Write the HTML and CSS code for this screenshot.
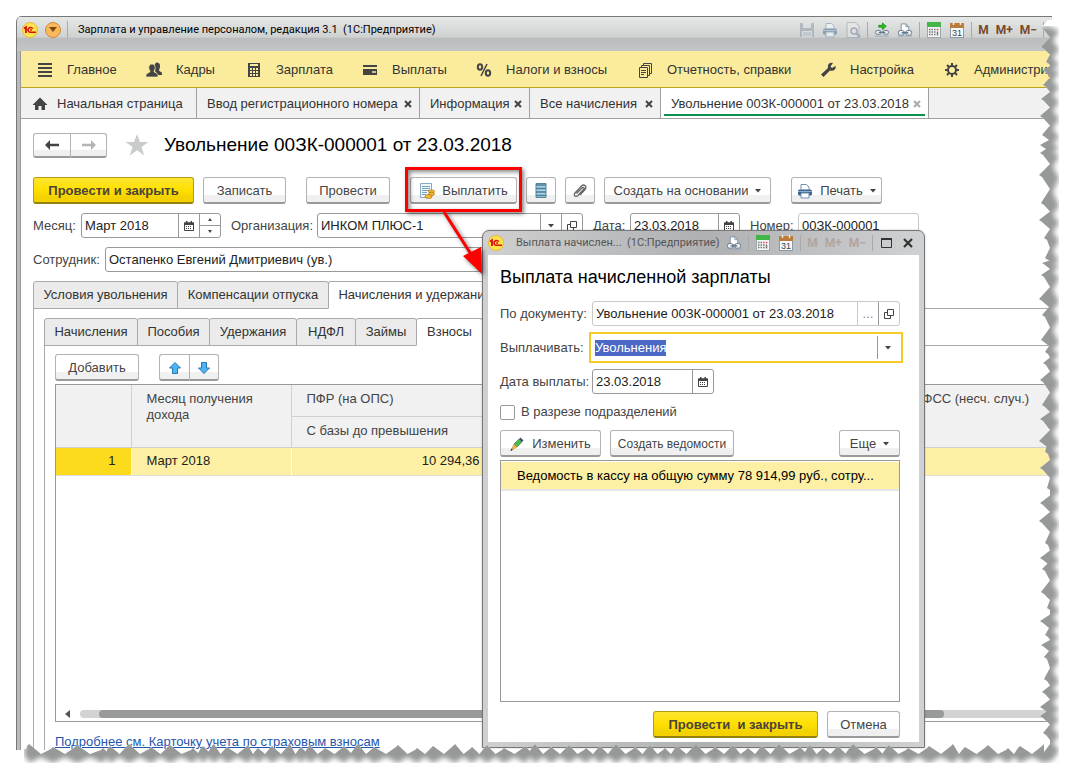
FILE: index.html
```html
<!DOCTYPE html>
<html lang="ru">
<head>
<meta charset="utf-8">
<title>Зарплата и управление персоналом</title>
<link rel="stylesheet" href="styles.css">
</head>
<body>
<svg class="defs" aria-hidden="true">
  <symbol id="logo" viewBox="0 0 16 16"><circle cx="8" cy="8" r="7.5" fill="#ffe34d" stroke="#e8b93a"/><path d="M2 6.500 4 5.200V11" fill="none" stroke="#d8150b" stroke-width="1.900"/><path d="M10.800 6.600A2.600 2.400 0 1 0 8.800 10.300H14" fill="none" stroke="#d8150b" stroke-width="1.600"/><circle cx="9" cy="8" r=".9" fill="#d8150b"/></symbol>
  <symbol id="cal" viewBox="0 0 10 10"><path d="M.5 2h9v7.500h-9z" fill="#fff" stroke="#444"/><path d="M0 1.500h10V4H0zM2 0h1.500v2H2zM6.500 0H8v2H6.500z" fill="#444"/><path d="M2 5.500h6M2 7.500h6" stroke="#444" stroke-dasharray="1 1"/></symbol>
  <symbol id="open" viewBox="0 0 10 10"><path d="M3.500.5h6v6h-6zM3 3.500H.5v6h6V7" fill="none" stroke="#444"/></symbol>
  <symbol id="down" viewBox="0 0 6 4"><path d="M0 0h6L3 3.500z" fill="#444"/></symbol>
  <symbol id="linkprint" viewBox="0 0 17 16"><path d="M4.500 9V1.500h5l3 3V9" fill="#fff" stroke="#7d93ab"/><path d="M9.500 1.500v3h3" fill="none" stroke="#7d93ab"/><rect x="1.500" y="8.500" width="6" height="5" rx="2" fill="#eee" stroke="#60788f"/><rect x="9.500" y="8.500" width="6" height="5" rx="2" fill="#eee" stroke="#60788f"/><path d="M5 11h7" stroke="#60788f" stroke-width="1.500"/><path d="M1 14.500h15" stroke="#95a5b5"/></symbol>
  <symbol id="linkgo" viewBox="0 0 17 16"><path d="M5 3h4V.5L13 4 9 7.500V5H5z" fill="#23c71c" stroke="#0c7a0a" stroke-width=".7"/><rect x="1.500" y="8.500" width="6" height="4" rx="2" fill="#eee" stroke="#60788f"/><rect x="9.500" y="8.500" width="6" height="4" rx="2" fill="#eee" stroke="#60788f"/><path d="M5 10.500h7" stroke="#60788f" stroke-width="1.500"/><path d="M1 14.500h15" stroke="#95a5b5"/></symbol>
  <symbol id="calc" viewBox="0 0 14 16"><rect x=".5" y=".5" width="13" height="15" fill="#f4f4f4" stroke="#9aa"/><path d="M0 0h14v5H0z" fill="#43b649"/><path d="M2 7.500h7M2 10h7M2 12.500h7" stroke="#777" stroke-width="1.500" stroke-dasharray="1.500 1"/><path d="M10.500 6.800v1.500" stroke="#e33" stroke-width="1.500"/><path d="M10.500 9.500v4" stroke="#777" stroke-width="1.500"/></symbol>
  <symbol id="date" viewBox="0 0 14 16"><rect x=".5" y="1.500" width="13" height="14" fill="#f7f9fb" stroke="#8c9aa8"/><path d="M0 1h14v5H0z" fill="#bd7b3b"/><path d="M3.500 0v3M10.500 0v3" stroke="#f4e8d8" stroke-width="1.500"/><text x="7" y="14" text-anchor="middle" class="icon-text">31</text></symbol>
  <symbol id="printer" viewBox="0 0 16 15"><path d="M4 6V1h5.500L12 3.500V6" fill="#fff" stroke="#6f8fb3"/><rect x="1" y="6" width="14" height="6" rx="1.500" fill="#3c628d"/><path d="M1 8h14" stroke="#8fb0d2"/><path d="M4 9.500h8v5H4z" fill="#fff" stroke="#6f8fb3"/></symbol>
</svg>

<div class="stage">
  <main class="window">
    <header class="titlebar">
      <svg class="i16"><use href="#logo"/></svg>
      <button class="round" aria-label="Меню"><svg width="8" height="5"><path d="M0 0h8L4 5z" fill="#7b4a17"/></svg></button>
      <span class="app-title">Зарплата и управление персоналом, редакция 3.1&nbsp; (1С:Предприятие)</span>
      <div class="tools">
        <svg class="i16 dim" viewBox="0 0 16 16"><path d="M1 1h14v14H1z" fill="#8a97a5"/><path d="M4 1h8v5H4zM3 9h10v6H3z" fill="#dde1e5"/><path d="M4 11h8M4 13h8" stroke="#8a97a5"/></svg>
        <svg class="i16 dim"><use href="#printer"/></svg>
        <svg class="i16 dim" viewBox="0 0 16 16"><path d="M2 .5h8L14 4v11.500H2z" fill="#e8eaec" stroke="#8a97a5"/><circle cx="9" cy="9" r="3" fill="#dfe6ee" stroke="#6d7f91" stroke-width="1.500"/><path d="m11 11 4 4" stroke="#6d7f91" stroke-width="2"/></svg>
        <i class="sep"></i>
        <svg class="i16"><use href="#linkgo"/></svg>
        <svg class="i16"><use href="#linkprint"/></svg>
        <i class="sep"></i>
        <svg class="i16"><use href="#calc"/></svg>
        <svg class="i16"><use href="#date"/></svg>
        <i class="sep"></i>
        <b>M</b><b>M+</b><b>M−</b>
        <i class="sep"></i>
      </div>
    </header>

    <nav class="menu">
      <a href="#"><svg viewBox="0 0 16 16"><path d="M1 2h14M1 6h14M1 10h14M1 14h14" stroke="#444" stroke-width="2"/></svg>Главное</a>
      <a href="#"><svg viewBox="0 0 16 16"><path d="M11 .5c2 0 3 1.500 3 3.500S13 7.500 13 8.500s3 1 3 3V13h-4l-3-4 .5-2C8 5 8.500.5 11 .5z" fill="#444"/><path d="M6 2c2 0 3.200 1.500 3.200 3.500S8 8.500 8 9.500c0 1.500 4 1 4 4V15H0v-1.500c0-3 4-2.500 4-4 0-1-1.200-2-1.200-4S4 2 6 2z" fill="#444" stroke="#fbec9d" stroke-width=".7"/></svg>Кадры</a>
      <a href="#"><svg viewBox="0 0 16 16"><path d="M2 1h12v14H2z" fill="#444"/><path d="M4 3h8M4 7h2m1 0h2m1 0h2M4 10h2m1 0h2m1 0h2M4 13h2m1 0h2m1 0h2" stroke="#fbec9d" stroke-width="2"/></svg>Зарплата</a>
      <a href="#"><svg viewBox="0 0 16 16"><path d="M1 3h14v2H1zM1 7h14v6H1z" fill="#444"/><path d="M10 10h4" stroke="#fbec9d" stroke-width="1.500"/></svg>Выплаты</a>
      <a href="#"><svg viewBox="0 0 16 16"><g fill="none" stroke="#444" stroke-width="2"><ellipse cx="4" cy="5" rx="2.200" ry="2.800"/><ellipse cx="12" cy="11" rx="2.200" ry="2.800"/><path d="M11 2 5 14" stroke-width="1.500"/></g></svg>Налоги и взносы</a>
      <a href="#"><svg viewBox="0 0 16 16"><path d="M2.500 5.500h8v10h-8zM4.500 5V3.500h8v10H11M6.500 3V1.500h8v10H13" fill="none" stroke="#444"/><path d="M4 8.500h5M4 10.500h5M4 12.500h3" stroke="#444"/></svg>Отчетность, справки</a>
      <a href="#"><svg viewBox="0 0 16 16"><path d="M15.500 4 12 6 10.500 4.500 13 1C10 0 7 2 8 6L1 12.500 3.500 15 10 8.500c4 1 6.500-1.500 5.500-4.500z" fill="#444"/></svg>Настройка</a>
      <a href="#"><svg viewBox="0 0 16 16"><circle cx="8" cy="8" r="4" fill="none" stroke="#444" stroke-width="2"/><path d="M8 1v3M8 12v3M1 8h3M12 8h3M3 3l2 2M11 11l2 2M13 3l-2 2M5 11l-2 2" stroke="#444" stroke-width="2"/></svg>Администрирование</a>
    </nav>

    <nav class="pages">
      <a href="#" class="home"><svg class="i16" viewBox="0 0 16 16"><path d="M8 1.500 15.500 9H13v5H9.500v-4h-3v4H3V9H.5z" fill="#444"/></svg>Начальная страница</a>
      <a href="#" class="p2">Ввод регистрационного номера<svg class="x" viewBox="0 0 8 8"><path d="m1 1 6 6m0-6L1 7"/></svg></a>
      <a href="#" class="p3">Информация<svg class="x" viewBox="0 0 8 8"><path d="m1 1 6 6m0-6L1 7"/></svg></a>
      <a href="#" class="p4">Все начисления<svg class="x" viewBox="0 0 8 8"><path d="m1 1 6 6m0-6L1 7"/></svg></a>
      <a href="#" class="p5 active">Увольнение 00ЗК-000001 от 23.03.2018<svg class="x" viewBox="0 0 8 8"><path d="m1 1 6 6m0-6L1 7"/></svg></a>
    </nav>

    <section class="doc">
      <div class="headline">
        <div class="pair nav-pair">
          <button class="btn" aria-label="Назад"><svg width="14" height="10"><path d="M5 0v3.800h9v2.400H5V10L0 5z" fill="#444"/></svg></button>
          <button class="btn" aria-label="Вперед"><svg width="14" height="10"><path d="M9 0v3.800H0v2.400h9V10l5-5z" fill="#b4b4b4"/></svg></button>
        </div>
        <svg class="star" viewBox="0 0 24 24"><path d="m12 1 3 8h8.500l-7 5 2.700 8.500L12 17.300l-7.200 5.200L7.500 14l-7-5H9z" fill="#c9cbcc"/></svg>
        <h1>Увольнение 00ЗК-000001 от 23.03.2018</h1>
      </div>

      <div class="commands">
        <button class="btn primary w-main">Провести и закрыть</button>
        <button class="btn w-save">Записать</button>
        <button class="btn w-post apart">Провести</button>
        <div class="target apart">
          <button class="btn w-pay"><svg class="i16" viewBox="0 0 16 16"><path d="M1.500.5h11v14h-11z" fill="#eef6fb" stroke="#88a9c2"/><path d="M3 3.500h8M3 5.500h8M3 7.500h8M3 9.500h5M3 11.500h4" stroke="#7aa3bf"/><g fill="#f3b72f" stroke="#a9700c" stroke-width=".6"><ellipse cx="12.500" cy="8.500" rx="3" ry="1.700"/><ellipse cx="12.500" cy="11" rx="3" ry="1.700"/><ellipse cx="9.500" cy="13.500" rx="3.500" ry="2"/></g></svg>Выплатить</button>
          <span class="mark"></span>
          <svg class="arrow" width="60" height="76"><g filter="drop-shadow(2px 2px 2px #0008)"><path d="m5 2 32 50" stroke="#f00" stroke-width="3"/><path d="M24 46 42 37 43 64z" fill="#f00"/></g></svg>
        </div>
        <button class="btn w-ico" aria-label="Движения"><svg width="12" height="15"><path d="M1 .5h10v14H1z" fill="#a8d0de" stroke="#56859b"/><path d="M1 2h10M1 5.500h10M1 9h10M1 12.500h10" stroke="#487f9b" stroke-width="1.500"/></svg></button>
        <button class="btn w-ico" aria-label="Файлы"><svg width="14" height="14" viewBox="0 0 14 14"><path d="M3.500 9.500 9 4c1.500-1.500 3 0 1.500 1.500L5 11.500c-2 2-5 0-3-2.500L8.500 2c2.500-2.500 6 .5 3.500 3.500L7 11" fill="none" stroke="#666" stroke-width="1.300"/></svg></button>
        <button class="btn w-base">Создать на основании<svg class="dn"><use href="#down"/></svg></button>
        <button class="btn w-print apart"><svg class="i16"><use href="#printer"/></svg>Печать<svg class="dn"><use href="#down"/></svg></button>
      </div>

      <div class="fields">
        <label class="l-month" for="month">Месяц:</label>
        <div class="field f-month"><input id="month" value="Март 2018"><button aria-label="Календарь"><svg class="i10"><use href="#cal"/></svg></button>
          <div class="spin"><button aria-label="Больше"><svg width="4" height="3"><path d="M0 3h4L2 0z" fill="#444"/></svg></button><button aria-label="Меньше"><svg width="4" height="3"><path d="M0 0h4L2 3z" fill="#444"/></svg></button></div></div>
        <label class="l-org" for="org">Организация:</label>
        <div class="field f-org"><input id="org" value="ИНКОМ ПЛЮС-1"><button aria-label="Выбрать"><svg class="dn"><use href="#down"/></svg></button><button aria-label="Открыть"><svg class="i10"><use href="#open"/></svg></button></div>
        <label class="l-date" for="date1">Дата:</label>
        <div class="field f-date"><input id="date1" value="23.03.2018"><button aria-label="Календарь"><svg class="i10"><use href="#cal"/></svg></button></div>
        <label class="l-num" for="num">Номер:</label>
        <div class="field f-num light"><input id="num" value="00ЗК-000001"></div>
      </div>
      <div class="fields">
        <label class="l-emp" for="emp">Сотрудник:</label>
        <div class="field f-emp"><input id="emp" value="Остапенко Евгений Дмитриевич (ув.)"></div>
      </div>

      <div class="tabs outer">
        <button class="t-a">Условия увольнения</button><button class="t-b">Компенсации отпуска</button><button class="t-c on">Начисления и удержания</button>
      </div>
      <div class="panel">
        <div class="tabs">
          <button class="t-1">Начисления</button><button class="t-2">Пособия</button><button class="t-3">Удержания</button><button class="t-4">НДФЛ</button><button class="t-5">Займы</button><button class="t-6 on">Взносы</button>
        </div>
        <div class="panel inner">
          <div class="bar">
            <button class="btn w-add">Добавить</button>
            <div class="pair move-pair">
              <button class="btn" aria-label="Вверх"><svg width="12" height="12"><path d="m6 .5 5.500 5.500h-3v5.500h-5V6h-3z" fill="#4fb4f5" stroke="#2877b0"/></svg></button>
              <button class="btn" aria-label="Вниз"><svg width="12" height="12"><path d="M6 11.500.5 6h3V.5h5V6h3z" fill="#4fb4f5" stroke="#2877b0"/></svg></button>
            </div>
          </div>
          <div class="grid">
            <table>
              <colgroup><col class="c1"><col class="c2"><col class="c3"><col class="c4"><col></colgroup>
              <thead>
                <tr><th rowspan="2"></th><th rowspan="2">Месяц получения дохода</th><th class="one">ПФР (на ОПС)</th><th rowspan="2"></th><th rowspan="2">ФСС (несч. случ.)</th></tr>
                <tr><th class="one">С базы до превышения</th></tr>
              </thead>
              <tbody><tr><td class="cur">1</td><td>Март 2018</td><td class="num">10 294,36</td><td></td><td></td></tr></tbody>
            </table>
            <div class="scroll"><svg width="5" height="8"><path d="M5 0v8L0 4z" fill="#555"/></svg><div class="track"><div class="thumb"></div></div></div>
          </div>
          <a class="more" href="#">Подробнее см. Карточку учета по страховым взносам</a>
        </div>
      </div>
    </section>
  </main>

  <section class="dialog" role="dialog" aria-label="Выплата начисленной зарплаты">
    <header class="dlg-title">
      <svg class="i16"><use href="#logo"/></svg>
      <span>Выплата начислен...&nbsp; (1С:Предприятие)</span>
      <div class="tools">
        <svg class="i16"><use href="#linkprint"/></svg><i class="sep"></i>
        <svg class="i16"><use href="#calc"/></svg><svg class="i16"><use href="#date"/></svg><i class="sep"></i>
        <b class="off">M</b><b class="off">M+</b><b class="off">M−</b><i class="sep"></i>
        <button aria-label="Развернуть"><svg width="11" height="10"><path d="M.5 1h10v8.500H.5z" fill="none" stroke="#333"/><path d="M0 1h11" stroke="#333" stroke-width="2"/></svg></button>
        <button aria-label="Закрыть"><svg width="10" height="10"><path d="m1 1 8 8m0-8L1 9" stroke="#333" stroke-width="2.200"/></svg></button>
      </div>
    </header>
    <div class="dlg-body">
      <h2>Выплата начисленной зарплаты</h2>
      <div class="row"><label for="doc">По документу:</label><div class="field grow light"><input id="doc" value="Увольнение 00ЗК-000001 от 23.03.2018"><button class="dots" aria-label="Выбрать">...</button><button class="dark" aria-label="Открыть"><svg class="i10"><use href="#open"/></svg></button></div></div>
      <div class="row"><label for="pay">Выплачивать:</label><div class="field grow focus"><div class="combo" id="pay" role="combobox" tabindex="0"><mark>Увольнения</mark></div><button aria-label="Выбрать"><svg class="dn"><use href="#down"/></svg></button></div></div>
      <div class="row"><label for="pdate">Дата выплаты:</label><div class="field f-pdate"><input id="pdate" value="23.03.2018"><button aria-label="Календарь"><svg class="i10"><use href="#cal"/></svg></button></div></div>
      <div class="check"><input type="checkbox" id="split"><label for="split">В разрезе подразделений</label></div>
      <div class="bar">
        <button class="btn w-edit"><svg class="i14" viewBox="0 0 14 14"><path d="m4 7 5-5 3 3-5 5z" fill="#4cb852" stroke="#2b7d33" stroke-width=".6"/><path d="m9 2 1.500-1.500 3 3L12 5z" fill="#4a4578"/><path d="m4 7 3 3-6 3.500z" fill="#eeb84a" stroke="#a97b25" stroke-width=".5"/><path d="m.5 14 .8-2.500 1.500 1.500z" fill="#333"/></svg>Изменить</button>
        <button class="btn w-list">Создать ведомости</button>
        <button class="btn w-more">Еще<svg class="dn"><use href="#down"/></svg></button>
      </div>
      <div class="list"><div class="item">Ведомость в кассу на общую сумму 78 914,99 руб., сотру...</div></div>
      <footer><button class="btn primary w-ok">Провести&nbsp; и закрыть</button><button class="btn w-cancel">Отмена</button></footer>
    </div>
  </section>

  <svg class="torn" viewBox="0 0 1074 777" preserveAspectRatio="none" aria-hidden="true">
    <defs>
      <clipPath id="outside"><path id="edge"/></clipPath>
      <filter id="soft" x="0" y="0" width="1" height="1"><feGaussianBlur stdDeviation="2.500"/></filter>
    </defs>
    <g clip-path="url(#outside)"><path d="M21 16H1074V777H21z" fill="#fff"/><path id="shade" fill="#969998" filter="url(#soft)"/></g>
  </svg>
</div>
<script src="torn.js"></script>
</body>
</html>
```

FILE: styles.css
```css
* { box-sizing: border-box; }
body { margin: 0; background: #fff; color: #333; font: 13px/16px "Liberation Sans", Arial, sans-serif; }
button, input { font: inherit; color: inherit; margin: 0; padding: 0; border: 0; background: none; }
input { min-width: 0; outline: 0; }
a { color: inherit; text-decoration: none; }
h1, h2 { margin: 0; font-weight: 400; color: #000; font-size: 19px; line-height: 24px; white-space: nowrap; }
svg { flex: none; display: block; }
.defs { display: none; }
.i16 { width: 16px; height: 16px; }
.i14 { width: 14px; height: 14px; }
.i10 { width: 10px; height: 10px; }
.dn { width: 6px; height: 4px; }
.icon-text { font: 9px "Liberation Sans", sans-serif; fill: #345; }
.dim { opacity: .5; }

.stage { position: relative; min-height: 100vh; display: flex; padding: 16px 22px 27px 16px; overflow: hidden; }
.window { flex: 1; min-width: 0; display: flex; flex-direction: column; overflow: hidden; border-left: 1px solid #777; border-radius: 6px 0 0 0; padding-left: 4px; background: linear-gradient(90deg, #b9bbbd 3px, #999 3px, #999 4px, #fff 4px); }

.titlebar { height: 35px; flex: none; display: flex; align-items: center; margin-left: -4px; padding: 0 9px 9px 5px; border-top: 1px solid #777; background: linear-gradient(#e6e8e8, #cfd1d1 60%, #bbbcbe 61%, #c4c5c7); color: #000; }
.round { width: 16px; height: 16px; margin-left: 7px; border-radius: 50%; border: 1px solid #c98a3a; background: #fbb95c; display: grid; place-items: center; }
.app-title { margin-left: 6px; padding-left: 10px; border-left: 1px solid #aaa; font: 11px/18px Roboto, sans-serif; white-space: nowrap; }
.tools { margin-left: auto; display: flex; align-items: center; gap: 7px; }
.tools b { font: bold 12px/16px Roboto, sans-serif; color: #7a4a2a; }
.tools b.off { color: #b3a59c; }
.sep { width: 1px; height: 16px; margin: 0 -1px; background: #aaa; }

.menu { height: 37px; flex: none; display: grid; grid-template-columns: 109px 100px 116px 114px 161px 183px 124px 160px; padding: 1px 0 0 16px; background: #fbec9d; border-bottom: 1px solid #bda21c; align-items: center; overflow: hidden; }
.menu a { display: flex; align-items: center; gap: 14px; white-space: nowrap; }
.menu svg { width: 16px; height: 16px; }

.pages { height: 31px; flex: none; display: flex; background: #f1f1f1; border-bottom: 1px solid #a0a0a0; }
.pages a { flex: none; display: flex; align-items: center; justify-content: space-between; padding: 1px 7px 0 10px; border-right: 1px solid #a0a0a0; white-space: nowrap; }
.pages .home { width: 176px; justify-content: flex-start; gap: 9px; padding-left: 11px; }
.p2 { width: 223px; }
.p3 { width: 110px; }
.p4 { width: 131px; }
.p5 { width: 268px; }
.pages .active { position: relative; background: #fff; }
.active::after { content: ""; position: absolute; left: 3px; right: 3px; bottom: 2px; height: 2px; background: #0a9150; }
.x { width: 8px; height: 8px; stroke: #444; stroke-width: 2; fill: none; }
.active .x { stroke: #aaa; }

.doc { flex: 1; display: flex; flex-direction: column; padding: 12px 0 0 12px; }
.headline { display: flex; align-items: center; height: 28px; }
.headline h1 { margin-left: 15px; }
.star { width: 24px; height: 24px; margin-left: 18px; }

.btn { height: 27px; flex: none; display: flex; align-items: center; justify-content: center; padding-top: 1px; border: 1px solid #b3b3b3; border-bottom: 2px solid #9a9a9a; border-radius: 3px; background: linear-gradient(#fff 70%, #f0f0f0 72%); color: #444; white-space: nowrap; }
.primary { font-weight: 700; color: #4b4339; border-color: #b89b12 #b89b12 #94800f; background: linear-gradient(#ffe630, #ffe000 50%, #f3d200 80%); }
.pair { display: flex; }
.pair .btn:first-child { border-radius: 3px 0 0 3px; border-right-width: 0; }
.pair .btn:last-child { border-radius: 0 3px 3px 0; }
.nav-pair .btn { width: 37px; height: 25px; }
.move-pair .btn { width: 30px; }
.commands { display: flex; gap: 9px; margin-top: 18px; }
.commands .apart { margin-left: 11px; }
.w-main { width: 161px; }
.w-save { width: 83px; }
.w-post { width: 84px; }
.w-pay { width: 107px; gap: 7px; }
.w-ico { width: 30px; }
.w-base { width: 167px; gap: 7px; }
.w-print { width: 91px; gap: 7px; }
.w-add { width: 84px; }
.target { position: relative; }
.mark { position: absolute; inset: -10px -5px -8px -5px; border: 3px solid #f00; box-shadow: 2px 2px 4px #0007, inset 2px 2px 4px #0007; pointer-events: none; }
.arrow { position: absolute; left: 29px; top: 33px; z-index: 3; pointer-events: none; }

.fields { display: flex; align-items: center; margin-top: 9px; color: #444; }
.fields label { margin-right: 6px; white-space: nowrap; }
.fields .field { margin-right: 10px; }
.l-month, .l-num { width: 42px; }
.l-org { width: 80px; }
.l-date { width: 31px; }
.l-emp { width: 66px; }
.field { height: 25px; flex: none; display: flex; border: 1px solid #999; border-radius: 3px; background: #fff; color: #222; }
.field input { flex: 1; padding: 1px 0 0 3px; }
.field > button { width: 21px; flex: none; border-left: 1px solid #999; display: grid; place-items: center; }
.field.light { border-color: #c8c8c8; }
.field.light > button { border-color: #c8c8c8; }
.field.light > .dark { border-color: #999; }
.field > .dots { color: #888; }
.spin { width: 21px; border-left: 1px solid #999; display: flex; flex-direction: column; }
.spin button { flex: 1; display: grid; place-items: center; }
.spin button + button { border-top: 1px solid #999; }
.f-month { width: 140px; }
.f-org { width: 266px; }
.f-date { width: 110px; }
.f-num { width: 121px; }
.f-emp { width: 460px; }

.tabs { display: flex; }
.tabs button { height: 28px; flex: none; margin-left: -1px; border: 1px solid #aaa; border-radius: 3px 3px 0 0; background: #ebebeb; }
.tabs button:first-child { margin-left: 0; }
.tabs .on { position: relative; z-index: 1; background: #fff; border-bottom-color: #fff; }
.outer { margin-top: 9px; }
.t-a { width: 145px; }
.t-b { width: 152px; }
.t-c { width: 174px; }
.t-1 { width: 94px; }
.t-2 { width: 73px; }
.t-3 { width: 88px; }
.t-4 { width: 60px; }
.t-5 { width: 62px; }
.t-6 { width: 67px; }
.panel { flex: 1; display: flex; flex-direction: column; margin-top: -1px; padding: 9px 0 0 10px; border: solid #aaa; border-width: 1px 0 0 1px; }
.inner { padding-top: 8px; }
.bar { display: flex; }
.move-pair { margin-left: 20px; }
.grid { flex: 1; margin-top: 3px; display: flex; flex-direction: column; justify-content: space-between; border: 1px solid #999; }
table { width: 100%; table-layout: fixed; border-collapse: collapse; }
.c1 { width: 75px; }
.c2 { width: 160px; }
.c3 { width: 200px; }
.c4 { width: 416px; }
th { font-weight: 400; text-align: left; vertical-align: top; color: #444; background: #f1f1f1; padding: 6px 15px 0; border: 1px solid #d0d0d0; border-top: 0; }
th:first-child, td:first-child { border-left: 0; }
th:last-child { border-right: 0; }
th:nth-child(n+4) { border-left-color: #f1f1f1; white-space: nowrap; }
th.one { height: 31px; white-space: nowrap; }
td { height: 28px; padding: 0 15px; background: #fdf0a4; background-clip: padding-box; border: 1px solid #fff; border-bottom-color: #ddd; color: #222; }
td.cur { background: #fcdb1f; text-align: right; }
td.num { text-align: right; padding-right: 11px; }
.scroll { display: flex; align-items: center; gap: 10px; height: 14px; padding-left: 9px; }
.track { flex: 1; height: 8px; border-radius: 4px; background: #d3d3d3; }
.thumb { width: 87%; height: 8px; margin-left: 2%; border-radius: 4px; background: #999b9a; }
.more { height: 28px; padding-top: 12px; color: #1f56ad; text-decoration: underline; white-space: nowrap; }

.dialog { position: absolute; z-index: 2; left: 482px; top: 230px; width: 443px; height: 518px; display: flex; flex-direction: column; padding: 0 5px 5px; border: 1px solid #777; border-radius: 7px 7px 0 0; background: linear-gradient(90deg, #d0d0d0, #aeb0b2 50%, #cfd1d2); box-shadow: 0 0 2px #0004; }
.dlg-title { height: 24px; flex: none; display: flex; align-items: center; color: #555; font: 11px/14px Roboto, sans-serif; white-space: nowrap; }
.dlg-title span { margin-left: 12px; }
.dlg-title .tools { padding-right: 4px; }
.dlg-title .tools button { padding: 0 2px; }
.dlg-body { flex: 1; display: flex; flex-direction: column; padding: 10px 19px 4px 12px; background: #fff; }
.dlg-body h2 { margin-bottom: 12px; font-size: 18px; }
.row { display: flex; align-items: center; margin-bottom: 9px; }
.row label { width: 92px; flex: none; color: #444; white-space: nowrap; }
.grow { flex: 1; }
.row .focus { height: 31px; margin: -3px; border: 2px solid #f7cb27; border-radius: 0; padding: 2px 3px; }
.combo { flex: 1; padding: 4px 1px; }
mark { display: inline-block; background: #4a68c4; color: #fff; }
.f-pdate { width: 122px; }
.check { display: flex; align-items: center; gap: 6px; height: 18px; color: #444; }
.check input { appearance: none; width: 15px; height: 15px; border: 1px solid #999; border-radius: 2px; }
.dlg-body .bar { gap: 9px; margin-top: 9px; }
.w-edit { width: 101px; gap: 8px; }
.w-list { width: 124px; font-size: 12px; }
.w-more { width: 61px; gap: 7px; margin-left: auto; }
.list { flex: 1; margin: 3px 0 9px; border: 1px solid #999; }
.item { margin-top: 1px; height: 27px; padding: 6px 0 0 16px; background: #fdf0a4; color: #000; box-shadow: 0 2px #e6e6e6; white-space: nowrap; overflow: hidden; }
.dlg-body footer { display: flex; justify-content: flex-end; gap: 9px; }
.w-ok { width: 165px; }
.w-cancel { width: 73px; }

.torn { position: absolute; inset: 0; width: 100%; height: 100%; pointer-events: none; z-index: 5; }
```

FILE: torn.js
```js
// Teeth along the right side [y, x] and the bottom side [x, y].
const right = [[28,1041],[47,1041],[62,1046],[70,1043],[85,1043],[99,1041],[116,1040],[135,1042],[145,1040],[153,1040],[175,1039],[203,1041],[220,1039],[238,1044],[258,1045],[263,1042],[275,1041],[299,1039],[315,1042],[340,1041],[352,1045],[363,1043],[380,1040],[405,1042],[419,1040],[441,1039],[452,1045],[468,1040],[488,1047],[503,1040],[521,1039],[543,1045],[558,1040],[569,1042],[592,1041],[608,1047],[621,1040],[635,1045],[645,1041],[657,1044],[679,1044],[692,1042],[707,1040],[716,1040],[733,1043]];
const bottom = [1044,1020,1008,988,965,953,929,908,889,876,853,838,823,810,800,779,762,748,733,715,696,677,665,650,635,616,600,586,569,551,535,525,504,487,472,455,433,417,398,374,358,344,325,310,301,290,272,258,248,227,214,203,193,170,151,129,110,103,77,53,29]
  .map((x, i) => [x, 744 + (i * 7) % 5]);

const inner = [[1048, 20]];
const outer = [[1048, 26]];
right.forEach(([y, x], i) => {
  const next = right[i + 1] ? right[i + 1][0] : 747;
  const mid = (y + next) / 2;
  inner.push([x, y], [x + 3, y + 2], [Math.min(1050, x + (next - y) / 2 + 2), mid]);
  outer.push([1059, y + 3], [1053, mid + 3]);
});
inner.push([1050, 744], [1044, 752]);
outer.push([1059, 750], [1053, 760]);
bottom.forEach(([x, y], i) => {
  const next = bottom[i + 1] ? bottom[i + 1][0] : 24;
  const mid = (x + next) / 2;
  inner.push([x, y], [x - 2, y + 2], [mid, Math.min(754, y + (x - next) / 2 + 2)]);
  outer.push([x, 763], [mid, 757]);
});
inner.push([22, 750]);
outer.push([24, 757]);

const line = pts => pts.map(p => p.join(" ")).join("L");
document.getElementById("edge").setAttribute("d", `M${line(inner)}L21 777L1074 777L1074 20Z`);
document.getElementById("shade").setAttribute("d", `M${line(outer)}L26 735L1030 735L1030 30Z`);
```
